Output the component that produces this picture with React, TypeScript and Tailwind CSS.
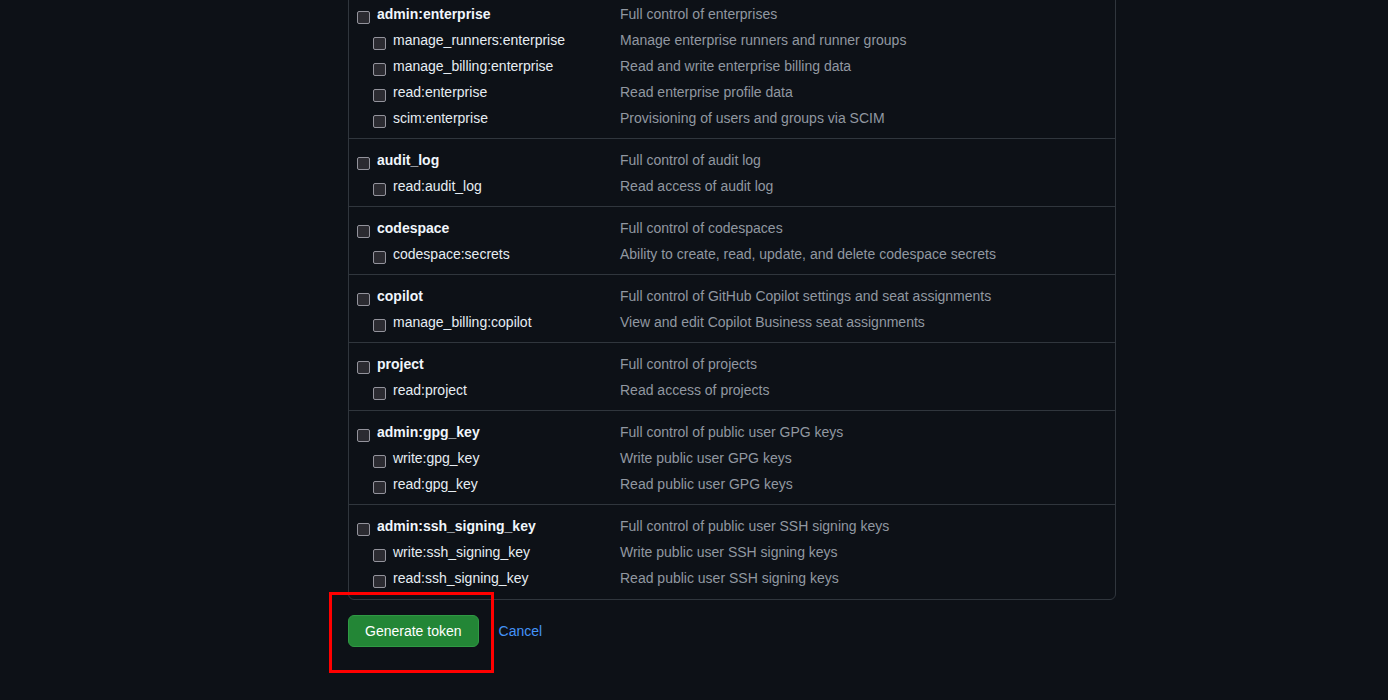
import React from "react";

interface Scope {
    name: string,
    desc: string,
}

interface ScopeGroup {
    head: Scope,
    children: Scope[],
}

const groups: ScopeGroup[] = [
    {
        head: { name: "admin:enterprise", desc: "Full control of enterprises" },
        children: [
            { name: "manage_runners:enterprise", desc: "Manage enterprise runners and runner groups" },
            { name: "manage_billing:enterprise", desc: "Read and write enterprise billing data" },
            { name: "read:enterprise", desc: "Read enterprise profile data" },
            { name: "scim:enterprise", desc: "Provisioning of users and groups via SCIM" },
        ],
    },
    {
        head: { name: "audit_log", desc: "Full control of audit log" },
        children: [{ name: "read:audit_log", desc: "Read access of audit log" }],
    },
    {
        head: { name: "codespace", desc: "Full control of codespaces" },
        children: [{ name: "codespace:secrets", desc: "Ability to create, read, update, and delete codespace secrets" }],
    },
    {
        head: { name: "copilot", desc: "Full control of GitHub Copilot settings and seat assignments" },
        children: [{ name: "manage_billing:copilot", desc: "View and edit Copilot Business seat assignments" }],
    },
    {
        head: { name: "project", desc: "Full control of projects" },
        children: [{ name: "read:project", desc: "Read access of projects" }],
    },
    {
        head: { name: "admin:gpg_key", desc: "Full control of public user GPG keys" },
        children: [
            { name: "write:gpg_key", desc: "Write public user GPG keys" },
            { name: "read:gpg_key", desc: "Read public user GPG keys" },
        ],
    },
    {
        head: { name: "admin:ssh_signing_key", desc: "Full control of public user SSH signing keys" },
        children: [
            { name: "write:ssh_signing_key", desc: "Write public user SSH signing keys" },
            { name: "read:ssh_signing_key", desc: "Read public user SSH signing keys" },
        ],
    },
]

const Box = () => (
    <span className="mt-[10px] w-[13px] h-[13px] shrink-0 rounded-[2px] border border-[#93939c] bg-[#2b2b31]"></span>
)

const ScopeRow = ({ scope, sub }: { scope: Scope, sub?: boolean }) => (
    <div className="flex items-start h-[26px] leading-[26px] text-sm">
        <label className={"flex items-start w-[271px] shrink-0 " + (sub ? "pl-[24px]" : "pl-[8px]")}>
            <Box />
            <span className={"ml-[7px] " + (sub ? "text-[#e6edf3]" : "font-bold text-[#f0f6fc]")}>{scope.name}</span>
        </label>
        <span className="text-[#9198a1]">{scope.desc}</span>
    </div>
)

export default function App() {
    return (
        <div className="h-[700px] overflow-hidden bg-[#0d1117]" style={{ fontFamily: '"Liberation Sans", Arial, sans-serif' }}>
            <div className="ml-[348px] w-[768px] -mt-[8px]">
                <div className="rounded-md border border-[#30363d]">
                    {groups.map((g, i) => (
                        <div
                            key={g.head.name}
                            className={i < groups.length - 1 ? "pt-2 pb-[7px] border-b border-[#30363d]" : "pt-2 pb-2"}
                        >
                            <ScopeRow scope={g.head} />
                            {g.children.map((c) => (
                                <ScopeRow key={c.name} scope={c} sub />
                            ))}
                        </div>
                    ))}
                </div>
                <div className="relative mt-[15px] flex items-center">
                    <button
                        type="button"
                        className="h-8 px-4 rounded-md border border-[#2f9a44] bg-[#238636] text-sm text-white"
                    >
                        Generate token
                    </button>
                    <a className="ml-5 text-sm text-[#4493f8]">Cancel</a>
                    <div className="absolute left-[-19px] top-[-23px] w-[165px] h-[81px] border-[3px] border-[#ff0000]"></div>
                </div>
            </div>
        </div>
    )
}
